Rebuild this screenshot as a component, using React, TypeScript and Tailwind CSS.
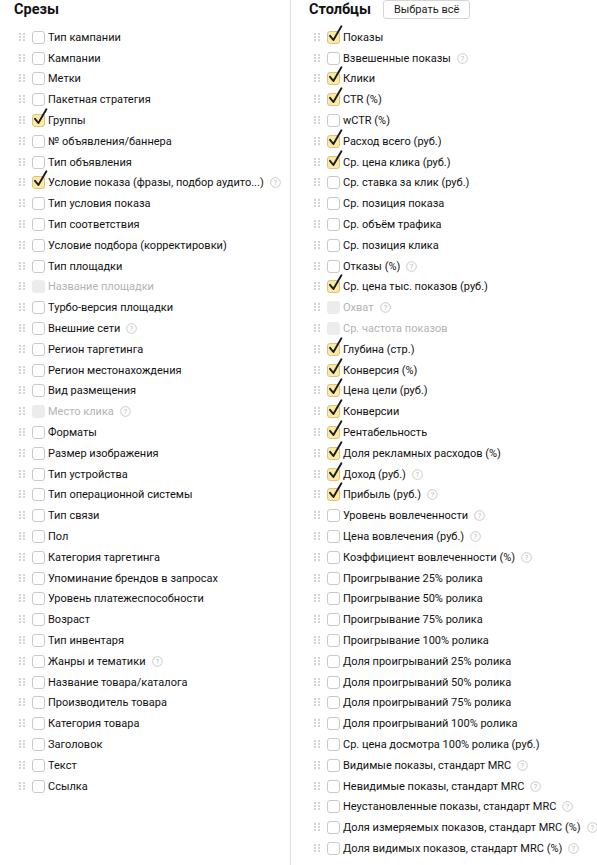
import React from "react";

type Item = { label: string; checked?: boolean; disabled?: boolean; help?: boolean };

const slices: Item[] = [
  { label: "Тип кампании" },
  { label: "Кампании" },
  { label: "Метки" },
  { label: "Пакетная стратегия" },
  { label: "Группы", checked: true },
  { label: "№ объявления/баннера" },
  { label: "Тип объявления" },
  { label: "Условие показа (фразы, подбор аудито...)", checked: true, help: true },
  { label: "Тип условия показа" },
  { label: "Тип соответствия" },
  { label: "Условие подбора (корректировки)" },
  { label: "Тип площадки" },
  { label: "Название площадки", disabled: true },
  { label: "Турбо-версия площадки" },
  { label: "Внешние сети", help: true },
  { label: "Регион таргетинга" },
  { label: "Регион местонахождения" },
  { label: "Вид размещения" },
  { label: "Место клика", disabled: true, help: true },
  { label: "Форматы" },
  { label: "Размер изображения" },
  { label: "Тип устройства" },
  { label: "Тип операционной системы" },
  { label: "Тип связи" },
  { label: "Пол" },
  { label: "Категория таргетинга" },
  { label: "Упоминание брендов в запросах" },
  { label: "Уровень платежеспособности" },
  { label: "Возраст" },
  { label: "Тип инвентаря" },
  { label: "Жанры и тематики", help: true },
  { label: "Название товара/каталога" },
  { label: "Производитель товара" },
  { label: "Категория товара" },
  { label: "Заголовок" },
  { label: "Текст" },
  { label: "Ссылка" },
];

const columns: Item[] = [
  { label: "Показы", checked: true },
  { label: "Взвешенные показы", help: true },
  { label: "Клики", checked: true },
  { label: "CTR (%)", checked: true },
  { label: "wCTR (%)" },
  { label: "Расход всего (руб.)", checked: true },
  { label: "Ср. цена клика (руб.)", checked: true },
  { label: "Ср. ставка за клик (руб.)" },
  { label: "Ср. позиция показа" },
  { label: "Ср. объём трафика" },
  { label: "Ср. позиция клика" },
  { label: "Отказы (%)", help: true },
  { label: "Ср. цена тыс. показов (руб.)", checked: true },
  { label: "Охват", disabled: true, help: true },
  { label: "Ср. частота показов", disabled: true },
  { label: "Глубина (стр.)", checked: true },
  { label: "Конверсия (%)", checked: true },
  { label: "Цена цели (руб.)", checked: true },
  { label: "Конверсии", checked: true },
  { label: "Рентабельность", checked: true },
  { label: "Доля рекламных расходов (%)", checked: true },
  { label: "Доход (руб.)", checked: true, help: true },
  { label: "Прибыль (руб.)", checked: true, help: true },
  { label: "Уровень вовлеченности", help: true },
  { label: "Цена вовлечения (руб.)", help: true },
  { label: "Коэффициент вовлеченности (%)", help: true },
  { label: "Проигрывание 25% ролика" },
  { label: "Проигрывание 50% ролика" },
  { label: "Проигрывание 75% ролика" },
  { label: "Проигрывание 100% ролика" },
  { label: "Доля проигрываний 25% ролика" },
  { label: "Доля проигрываний 50% ролика" },
  { label: "Доля проигрываний 75% ролика" },
  { label: "Доля проигрываний 100% ролика" },
  { label: "Ср. цена досмотра 100% ролика (руб.)" },
  { label: "Видимые показы, стандарт MRC", help: true },
  { label: "Невидимые показы, стандарт MRC", help: true },
  { label: "Неустановленные показы, стандарт MRC", help: true },
  { label: "Доля измеряемых показов, стандарт MRC (%)", help: true },
  { label: "Доля видимых показов, стандарт MRC (%)", help: true },
];

function Grip() {
  return (
    <svg width="6" height="9" viewBox="0 0 6 9" className="shrink-0">
      {[0, 3, 6].map((y) =>
        [0, 4].map((x) => (
          <rect key={`${x}-${y}`} x={x} y={y} width="2" height="2" fill="#d4d4d4" />
        ))
      )}
    </svg>
  );
}

function Help() {
  return (
    <svg width="11" height="11" viewBox="0 0 11 11" className="ml-[6px] shrink-0">
      <circle cx="5.5" cy="5.5" r="4.8" fill="none" stroke="#c8c8c8" strokeWidth="1" />
      <text x="5.5" y="8.3" textAnchor="middle" fontSize="8" fill="#c0c0c0" fontFamily="Roboto, Arial, sans-serif">
        ?
      </text>
    </svg>
  );
}

function Box({ checked, disabled }: { checked?: boolean; disabled?: boolean }) {
  if (disabled) {
    return <span className="relative block h-[13px] w-[13px] shrink-0 rounded-[3px] bg-[#ececec]" />;
  }
  if (checked) {
    return (
      <span className="relative block h-[13px] w-[13px] shrink-0 rounded-[3px] border border-[#d8c581] bg-[#fde9a5]">
        <svg width="16" height="18" viewBox="0 0 16 18" className="absolute left-[0px] top-[-7px] overflow-visible">
          <path d="M2 10.8 L5.4 15 L13.4 1.2" fill="none" stroke="#1a1a1a" strokeWidth="1.9" strokeLinecap="round" strokeLinejoin="round" />
        </svg>
      </span>
    );
  }
  return <span className="block h-[13px] w-[13px] shrink-0 rounded-[3px] border border-[#c9c9c9] bg-white" />;
}

function Row({ item }: { item: Item }) {
  return (
    <li className="flex h-[20.8px] items-center">
      <Grip />
      <span className="ml-[7px]">
        <Box checked={item.checked} disabled={item.disabled} />
      </span>
      <span className={`ml-[3px] whitespace-nowrap text-[11px] leading-none ${item.disabled ? "text-[#b3b3b3]" : "text-[#111]"}`}>
        {item.label}
      </span>
      {item.help && <Help />}
    </li>
  );
}

export default function App() {
  return (
    <div className="flex h-[865px] w-[597px] bg-white font-['Roboto',Arial,sans-serif]">
      <section className="w-[290px] shrink-0 pl-[14px]">
        <h2 className="flex h-[27px] items-start pt-[1px] text-[14.5px] font-bold leading-[18px] text-[#111]">Срезы</h2>
        <ul className="pl-[5px]">
          {slices.map((s) => (
            <Row key={s.label} item={s} />
          ))}
        </ul>
      </section>
      <section className="flex-1 border-l border-[#e0e0e0] pl-[18px]">
        <div className="flex h-[27px] items-start">
          <h2 className="pt-[1px] text-[14.5px] font-bold leading-[18px] text-[#111]">Столбцы</h2>
          <button className="ml-[12px] h-[19px] rounded-[3px] border border-[#d5d5d5] bg-white px-[10px] text-[11px] leading-none text-[#222]">
            Выбрать всё
          </button>
        </div>
        <ul className="pl-[5px]">
          {columns.map((c) => (
            <Row key={c.label} item={c} />
          ))}
        </ul>
      </section>
    </div>
  );
}
